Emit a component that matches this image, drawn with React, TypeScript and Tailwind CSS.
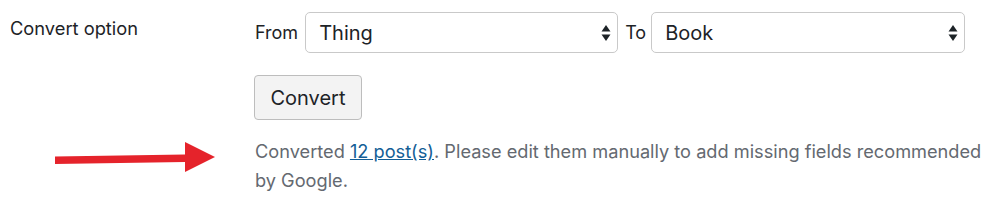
import React from "react";

const FONT = { fontFamily: "Inter, 'Liberation Sans', sans-serif" };

function Arrows() {
  return (
    <svg viewBox="0 0 10 16" className="h-[16px] w-[10px] text-[#1d2327]" aria-hidden="true">
      <path d="M5 0L9.5 6.5H0.5Z" fill="currentColor" />
      <path d="M5 16L9.5 9.5H0.5Z" fill="currentColor" />
    </svg>
  );
}

function FakeSelect({ value, width }: { value: string; width: string }) {
  return (
    <div
      className={`flex h-[41px] ${width} items-center justify-between rounded-[5px] border border-[#c9c9c9] bg-white pl-[13px] pr-[6px] text-[20px] text-[#1d2327]`}
    >
      <span>{value}</span>
      <Arrows />
    </div>
  );
}

function RedArrow() {
  return (
    <svg viewBox="0 0 160 32" className="h-[32px] w-[160px]" aria-hidden="true">
      <path d="M0 14.5L130 12.5L130 20L0 22Z" fill="#e5232b" />
      <path d="M130 0L160 15L130 30Z" fill="#e5232b" />
    </svg>
  );
}

export default function App() {
  return (
    <div className="h-[206px] w-[1000px] bg-white" style={FONT}>
      <div className="flex pt-[12px]">
        <div className="w-[245px] pl-[10px] pt-[3px] text-[18.3px] text-[#1d2327]">Convert option</div>
        <div className="flex flex-col">
          <div className="flex items-center text-[18px] text-[#1d2327]">
            <span className="pl-[10px] pr-[7px]">From</span>
            <FakeSelect value="Thing" width="w-[313px]" />
            <span className="pl-[7px] pr-[5px]">To</span>
            <FakeSelect value="Book" width="w-[314px]" />
          </div>
          <div className="pl-[9px] pt-[22px]">
            <button className="h-[45px] w-[108px] rounded-[4px] border border-[#bdbdbd] bg-[#f3f3f3] text-[20px] text-[#1d2327]">
              Convert
            </button>
          </div>
        </div>
      </div>
      <div className="flex pt-[17px]">
        <div className="flex w-[255px] pl-[55px] pt-[5px]">
          <RedArrow />
        </div>
        <p className="w-[740px] text-[18.2px] leading-[29px] text-[#646970]">
          Converted{" "}
          <a href="#" className="text-[#135e96] underline">
            12 post(s)
          </a>
          . Please edit them manually to add missing fields recommended by Google.
        </p>
      </div>
    </div>
  );
}
